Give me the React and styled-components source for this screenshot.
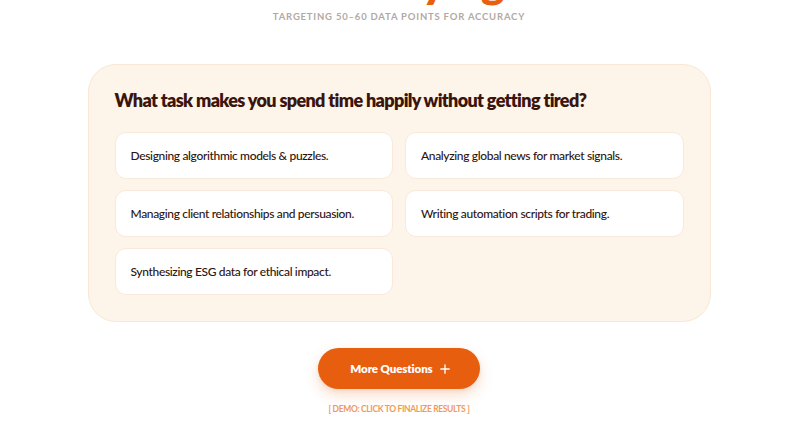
import styled, { createGlobalStyle } from "styled-components"

const GlobalStyle = createGlobalStyle`
    body {
        margin: 0;
        background: #ffffff;
        font-family: "Lato", "Liberation Sans", sans-serif;
        color: #3b1a12;
    }
`

const Page = styled.div`
    display: flex;
    flex-direction: column;
    align-items: center;
    overflow: hidden;
    height: 436px;
    padding-right: 8px;
`
const Title = styled.h1`
    margin: -44px 0 0;
    font-size: 44px;
    line-height: 50px;
    font-weight: 800;
    color: #e8600f;
    letter-spacing: -0.5px;
`
const Subtitle = styled.p`
    margin: 5px 0 0;
    font-size: 9.5px;
    font-weight: 700;
    letter-spacing: 0.8px;
    color: #b3a9a3;
    text-transform: uppercase;
`
const Panel = styled.section`
    box-sizing: border-box;
    width: 623px;
    margin-top: 42px;
    padding: 23px 26px 26px;
    background: #fdf4ea;
    border: 1px solid #f8e8d6;
    border-radius: 28px;
`
const Question = styled.h2`
    margin: 0 0 20px;
    font-size: 18px;
    line-height: 24px;
    font-weight: 800;
    letter-spacing: -0.65px;
    color: #3b150c;
`
const Options = styled.div`
    display: grid;
    grid-template-columns: 1fr 1fr;
    column-gap: 12px;
    row-gap: 11px;
`
const Option = styled.button`
    display: flex;
    align-items: center;
    height: 47px;
    padding: 0 15px;
    background: #ffffff;
    border: 1px solid #f8eadb;
    border-radius: 11px;
    font-family: inherit;
    font-size: 12px;
    font-weight: 500;
    letter-spacing: -0.35px;
    color: #2e1510;
    text-align: left;
    cursor: pointer;
`
const MoreButton = styled.button`
    display: flex;
    align-items: center;
    gap: 7px;
    margin-top: 26px;
    height: 41px;
    padding: 0 30px 0 32px;
    background: #e85e0f;
    border: none;
    border-radius: 21px;
    box-shadow: 0 6px 14px rgba(232, 94, 15, 0.22), 0 2px 4px rgba(0, 0, 0, 0.06);
    font-family: inherit;
    font-size: 11.5px;
    font-weight: 800;
    letter-spacing: -0.1px;
    color: #ffffff;
    cursor: pointer;
`
const Demo = styled.p`
    margin: 15px 0 0;
    font-size: 8.5px;
    font-weight: 700;
    letter-spacing: -0.35px;
    color: #f09a5a;
    text-transform: uppercase;
`

const options = [
    "Designing algorithmic models & puzzles.",
    "Analyzing global news for market signals.",
    "Managing client relationships and persuasion.",
    "Writing automation scripts for trading.",
    "Synthesizing ESG data for ethical impact.",
]

const PlusIcon = () => (
    <svg width="10" height="10" viewBox="0 0 12 12" fill="none">
        <path d="M6 1v10M1 6h10" stroke="#fff" strokeWidth="1.6" strokeLinecap="round" />
    </svg>
)

const App = () => {
    return (
        <>
            <GlobalStyle />
            <Page>
                <Title>Identifying</Title>
                <Subtitle>Targeting 50–60 data points for accuracy</Subtitle>
                <Panel>
                    <Question>What task makes you spend time happily without getting tired?</Question>
                    <Options>
                        {options.map((text) => (
                            <Option key={text}>{text}</Option>
                        ))}
                    </Options>
                </Panel>
                <MoreButton>
                    More Questions <PlusIcon />
                </MoreButton>
                <Demo>[ Demo: Click to finalize results ]</Demo>
            </Page>
        </>
    )
}

export default App
